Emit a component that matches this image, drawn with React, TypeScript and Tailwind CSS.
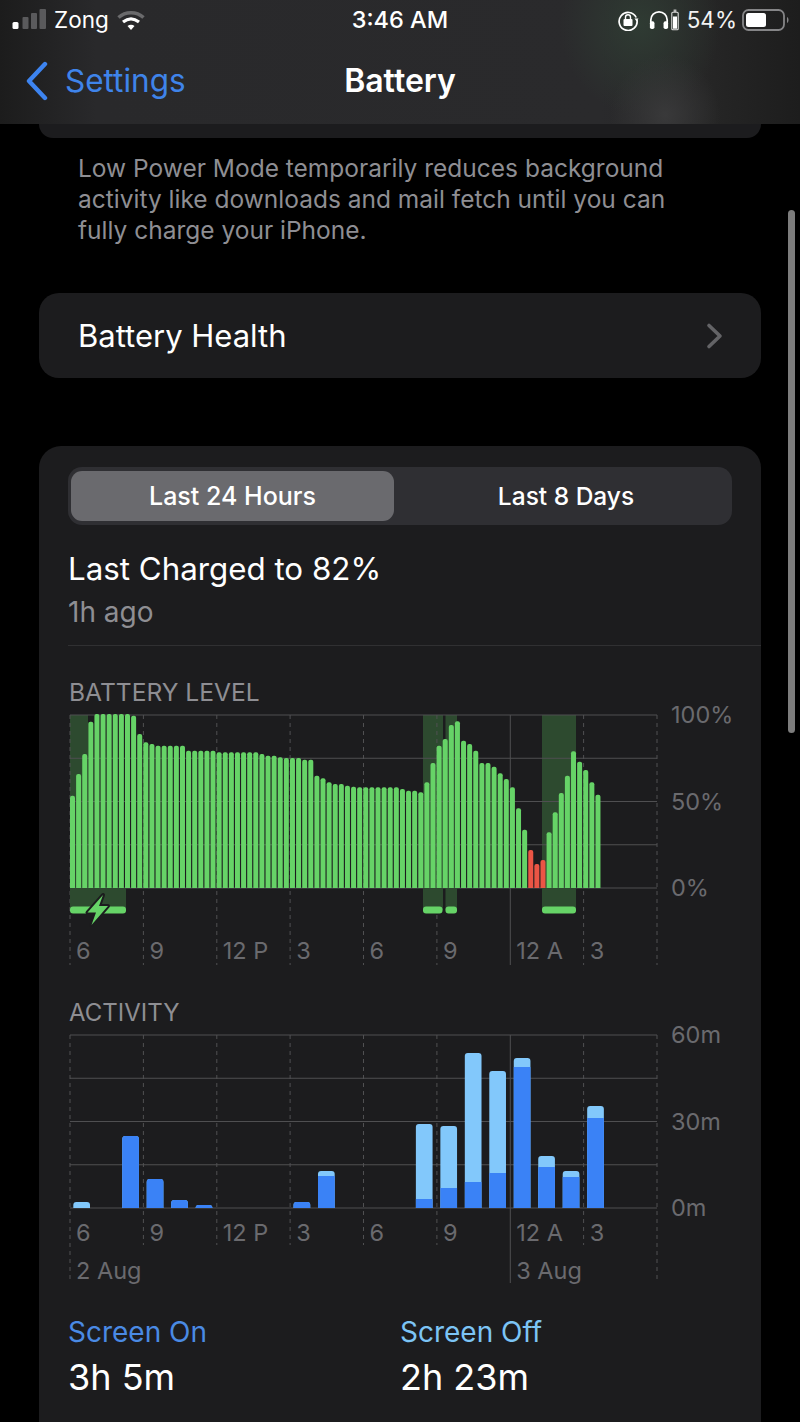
const batteryTops = [
  290, 225, 165, 68, 45, 45, 45, 45, 45, 45, 50, 105, 130, 135, 140, 140, 140, 140, 140, 155, 155, 155, 155, 155,
  160, 160, 160, 160, 160, 160, 160, 165, 170, 170, 175, 177, 177, 177, 182, 182, 230, 238, 250, 255, 255, 260, 263,
  265, 265, 265, 265, 265, 265, 265, 270, 275, 275, 280, 250, 192, 140, 120, 78, 67, 125, 135, 155, 192, 192, 203,
  223, 240, 265, 328, 392, 453, 495, 483, 400, 340, 282, 230, 157, 188, 213, 250, 287,
];

const activity = [
  { i: 0, total: 6, dark: 0 },
  { i: 2, total: 72, dark: 72 },
  { i: 3, total: 29, dark: 29 },
  { i: 4, total: 8, dark: 8 },
  { i: 5, total: 3, dark: 3 },
  { i: 9, total: 6, dark: 6 },
  { i: 10, total: 37, dark: 32 },
  { i: 14, total: 84, dark: 9 },
  { i: 15, total: 82, dark: 20 },
  { i: 16, total: 155, dark: 26 },
  { i: 17, total: 137, dark: 35 },
  { i: 18, total: 150, dark: 141 },
  { i: 19, total: 52, dark: 41 },
  { i: 20, total: 37, dark: 31 },
  { i: 21, total: 102, dark: 90 },
];

const verticals = [70, 143.4, 216.8, 290.1, 363.5, 436.9, 510.3, 583.6, 657];
const hourLabels = ['6', '9', '12 P', '3', '6', '9', '12 A', '3'];

function topRounded(x: number, y: number, w: number, h: number, r: number) {
  const rr = Math.min(r, h);
  return `M${x} ${y + h}V${y + rr}Q${x} ${y} ${x + rr} ${y}H${x + w - rr}Q${x + w} ${y} ${x + w} ${y + rr}V${y + h}Z`;
}

function Grid({ top, bottom, tall, short }: { top: number; bottom: number; tall: number; short: number }) {
  const step = (bottom - top) / 4;
  return (
    <g>
      {[0, 1, 2, 3, 4].map((n) => (
        <line key={n} x1={70} x2={657} y1={top + n * step} y2={top + n * step} stroke="#4f4f51" strokeWidth={1} />
      ))}
      {verticals.map((x, n) => {
        const solid = n === 6;
        const end = solid || n === 0 || n === 8 ? tall : short;
        return (
          <line
            key={x}
            x1={x}
            x2={x}
            y1={top}
            y2={end}
            stroke={solid ? '#4f4f51' : '#505052'}
            strokeWidth={1}
            strokeDasharray={solid ? undefined : '4 4'}
          />
        );
      })}
    </g>
  );
}

function BatteryChart() {
  return (
    <svg width={590} height={252} viewBox="69 714 590 252" className="block">
      <rect x={70} y={715} width={18} height={173} fill="#2d4a2f" />
      <rect x={423} y={715} width={20} height={173} fill="#2d4a2f" />
      <rect x={445.5} y={715} width={11.5} height={173} fill="#2d4a2f" />
      <rect x={542} y={715} width={34} height={173} fill="#2d4a2f" />
      <Grid top={715} bottom={888} tall={965} short={965} />
      <rect x={70} y={888} width={56} height={22} fill="#2d4a2f" />
      <rect x={423} y={888} width={20} height={22} fill="#2d4a2f" />
      <rect x={445.5} y={888} width={11.5} height={22} fill="#2d4a2f" />
      <rect x={542} y={888} width={34} height={22} fill="#2d4a2f" />
      {batteryTops.map((z, i) => {
        const h = (567 - z) / 3;
        const red = i >= 75 && i <= 77;
        return (
          <path
            key={i}
            d={topRounded(70 + i * 6.11, 888 - h, 5, h, 2)}
            fill={red ? '#eb5545' : '#66d367'}
          />
        );
      })}
      <rect x={70} y={906.5} width={56} height={7} rx={3} fill="#66d367" />
      <rect x={423} y={906.5} width={19.5} height={7} rx={3} fill="#66d367" />
      <rect x={445.5} y={906.5} width={11.5} height={7} rx={3} fill="#66d367" />
      <rect x={542} y={906.5} width={34} height={7} rx={3} fill="#66d367" />
      <path
        d="M103 895L87.5 912.5H96L91.5 925L108 906H99Z"
        fill="#66d367"
        stroke="#1c1c1e"
        strokeWidth={4}
        strokeLinejoin="round"
        paintOrder="stroke"
      />
    </svg>
  );
}

function ActivityChart() {
  return (
    <svg width={590} height={250} viewBox="69 1034 590 250" className="block">
      <Grid top={1035} bottom={1208} tall={1283} short={1245} />
      {activity.map((b) => {
        const x = 73.3 + b.i * 24.47;
        return (
          <g key={b.i}>
            <path d={topRounded(x, 1208 - b.total, 16.7, b.total, 3)} fill="#82c8fb" />
            {b.dark > 0 && (
              <path
                d={b.dark === b.total ? topRounded(x, 1208 - b.total, 16.7, b.total, 3) : `M${x} 1208V${1208 - b.dark}H${x + 16.7}V1208Z`}
                fill="#3a82f6"
              />
            )}
          </g>
        );
      })}
    </svg>
  );
}

function HourRow({ className }: { className: string }) {
  return (
    <div className={`absolute left-px w-[587px] grid grid-cols-8 text-[23.5px] leading-6 text-[#6a6a6e] ${className}`}>
      {hourLabels.map((label, n) => (
        <span key={n} className="pl-[6px]">
          {label}
        </span>
      ))}
    </div>
  );
}

function AxisLabels({ labels }: { labels: string[] }) {
  return (
    <div className="ml-3 -mt-[11px] h-[197px] flex flex-col justify-between text-[23.5px] leading-6 text-[#6a6a6e]">
      {labels.map((label) => (
        <span key={label}>{label}</span>
      ))}
    </div>
  );
}

function StatusLeft() {
  return (
    <div className="flex items-center">
      <svg width={36} height={24} viewBox="0 0 36 24" className="ml-3">
        <rect x={0.5} y={14} width={6} height={7} rx={1.5} fill="#fff" />
        <rect x={10.5} y={9} width={6} height={12} rx={1} fill="#5a5a5c" />
        <rect x={19} y={5} width={6} height={16} rx={1} fill="#5a5a5c" />
        <rect x={27.5} y={1} width={6.5} height={20} rx={1} fill="#5a5a5c" />
      </svg>
      <span className="ml-[6px] text-[22.5px] leading-8 text-white">Zong</span>
      <svg width={30} height={24} viewBox="0 0 30 24" className="ml-[7px]">
        <path d="M2.5 9.5C9.5 3 20.5 3 27.5 9.5" fill="none" stroke="#6a6a6c" strokeWidth={3.5} />
        <path d="M7 14C12 10 18 10 23 14" fill="none" stroke="#fff" strokeWidth={3.2} />
        <path d="M11.5 18C13.5 16.2 16.5 16.2 18.5 18L15 22Z" fill="#fff" />
      </svg>
    </div>
  );
}

function StatusRight() {
  return (
    <div className="flex items-center justify-end">
      <svg width={22} height={22} viewBox="0 0 22 22">
        <path d="M19.2 8.5A9 9 0 1 0 20 11" fill="none" stroke="#fff" strokeWidth={1.7} />
        <path d="M17.5 9.5L21.5 9.5L19.6 12.5Z" fill="#fff" />
        <rect x={6.5} y={10} width={9} height={7} rx={1} fill="#fff" />
        <path d="M8.5 10V8.3A2.5 2.5 0 0 1 13.5 8.3V10" fill="none" stroke="#fff" strokeWidth={1.4} />
      </svg>
      <svg width={20} height={22} viewBox="0 0 22 22" className="ml-[10px]">
        <path d="M2 15V11A9 9 0 0 1 20 11V15" fill="none" stroke="#fff" strokeWidth={1.9} />
        <rect x={1} y={12.5} width={5} height={8.5} rx={2} fill="#fff" />
        <rect x={16} y={12.5} width={5} height={8.5} rx={2} fill="#fff" />
      </svg>
      <svg width={8} height={22} viewBox="0 0 8 22" className="ml-[2px]">
        <rect x={2.6} y={0.5} width={2.8} height={2.5} fill="#bbb" />
        <rect x={0.8} y={3.2} width={6.4} height={17.6} rx={1} fill="none" stroke="#ddd" strokeWidth={1.1} />
        <rect x={2} y={7.5} width={4} height={12.2} fill="#fff" />
      </svg>
      <span className="ml-2 text-[22.5px] leading-8 text-[#f2f2f2]">54%</span>
      <svg width={49} height={24} viewBox="0 0 49 24" className="ml-[5px] mr-[9px]">
        <rect x={1} y={2} width={41} height={20} rx={5.5} fill="none" stroke="#858587" strokeWidth={1.8} />
        <rect x={4} y={5} width={20} height={14} rx={2.5} fill="#fff" />
        <path d="M45 9C47 10 47 14 45 15Z" fill="#858587" />
      </svg>
    </div>
  );
}

export default function App() {
  return (
    <div className="relative w-[800px] h-[1422px] overflow-hidden bg-black font-['Inter',sans-serif]">
      <header className="h-[124px] bg-[radial-gradient(ellipse_55px_60px_at_665px_115px,#39393a,transparent),radial-gradient(ellipse_80px_90px_at_640px_25px,#2f3b33,transparent),linear-gradient(90deg,#1c1c1c_0%,#29292b_12%,#2a2a2c_75%,#262626_88%,#1d1d1d_100%)]">
        <div className="h-10 grid grid-cols-3 items-center">
          <StatusLeft />
          <span className="text-center text-[23.5px] leading-8 font-medium text-white">3:46 AM</span>
          <StatusRight />
        </div>
        <nav className="mt-[21px] h-10 grid grid-cols-3 items-center">
          <div className="flex items-center">
            <svg width={24} height={40} viewBox="0 0 24 40" className="ml-[25px]">
              <path d="M20 3L4 20L20 37" fill="none" stroke="#3d84f0" strokeWidth={4.4} strokeLinecap="round" strokeLinejoin="round" />
            </svg>
            <span className="ml-4 text-[31.5px] leading-10 text-[#3f84ea]">Settings</span>
          </div>
          <span className="text-center text-[32px] leading-10 font-semibold text-white">Battery</span>
        </nav>
      </header>

      <div className="mx-[39px] h-[14px] rounded-b-[20px] bg-[#1c1c1e]" />
      <p className="mt-[15px] ml-[78px] w-[640px] text-[24.5px] leading-[31px] text-[#8e8e93]">
        Low Power Mode temporarily reduces background activity like downloads and mail fetch until you can fully charge your iPhone.
      </p>

      <div className="mt-[47px] mx-[39px] h-[85px] rounded-[20px] bg-[#1c1c1e] flex items-center justify-between pl-[39px] pr-[36px]">
        <span className="text-[31px] leading-10 text-white">Battery Health</span>
        <svg width={20} height={28} viewBox="0 0 20 28">
          <path d="M4 3.5L15 14L4 24.5" fill="none" stroke="#636366" strokeWidth={3.6} strokeLinecap="round" strokeLinejoin="round" />
        </svg>
      </div>

      <section className="mt-[68px] mx-[39px] h-[1000px] rounded-[22px] bg-[#1c1c1e] pt-[21px]">
        <div className="mx-[29px] h-[58px] rounded-[14px] bg-[#2f2f33] p-1 pl-[3px] flex items-center">
          <div className="w-[323px] h-[50px] rounded-[11px] bg-[#6a6a6e] flex items-center justify-center text-[25px] leading-[52px] font-medium text-white">
            Last 24 Hours
          </div>
          <div className="flex-1 pl-[10px] text-center text-[24.5px] font-medium text-white">Last 8 Days</div>
        </div>

        <div className="mt-[26px] ml-[29px] text-[31.3px] leading-9 text-white">Last Charged to 82%</div>
        <div className="mt-2 ml-[29px] text-[28px] leading-[34px] text-[#8e8e93]">1h ago</div>
        <div className="mt-4 ml-[29px] h-px bg-[#303032]" />

        <div className="mt-8 ml-[30px] text-[24.6px] leading-7 text-[#8e8e93]">BATTERY LEVEL</div>
        <div className="mt-2 ml-[30px] flex">
          <div className="relative">
            <BatteryChart />
            <HourRow className="top-[225px]" />
          </div>
          <AxisLabels labels={['100%', '50%', '0%']} />
        </div>

        <div className="mt-8 ml-[30px] text-[24px] leading-[30px] h-7 text-[#8e8e93]">ACTIVITY</div>
        <div className="mt-2 ml-[30px] flex">
          <div className="relative">
            <ActivityChart />
            <HourRow className="top-[187px]" />
            <div className="absolute left-px top-[225px] w-[587px] grid grid-cols-8 text-[23.5px] leading-6 text-[#6a6a6e]">
              <span className="pl-[6px] col-span-6">2 Aug</span>
              <span className="pl-[6px] col-span-2">3 Aug</span>
            </div>
          </div>
          <AxisLabels labels={['60m', '30m', '0m']} />
        </div>

        <div className="mt-[31px] ml-[29px] flex">
          <div className="w-[332px]">
            <div className="text-[28px] leading-[34px] text-[#4a8ae4]">Screen On</div>
            <div className="mt-[6px] text-[36px] leading-[44px] text-white">3h 5m</div>
          </div>
          <div>
            <div className="text-[28px] leading-[34px] text-[#7cc4f5]">Screen Off</div>
            <div className="mt-[6px] text-[36px] leading-[44px] text-white">2h 23m</div>
          </div>
        </div>
      </section>

      {/* scroll indicator */}
      <div className="absolute left-[788px] top-[210px] w-[7px] h-[523px] rounded-full bg-[#7d7d7d]" />
    </div>
  );
}
